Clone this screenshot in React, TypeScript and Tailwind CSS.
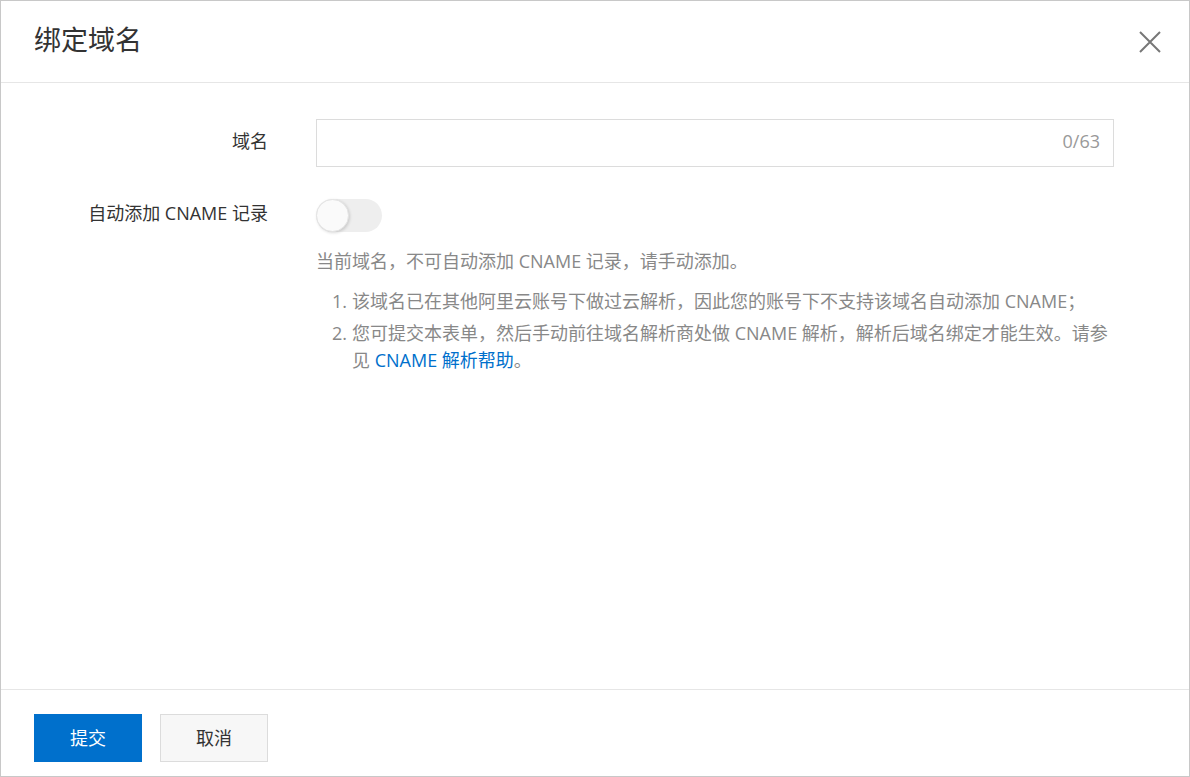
import React from 'react'

const font = "font-['Open_Sans','Noto_Sans_CJK_SC',sans-serif]"

const CloseIcon = () => (
  <svg width="24" height="24" viewBox="0 0 24 24" fill="none">
    <path d="M2 2 L22 22 M22 2 L2 22" stroke="#777" strokeWidth="2" />
  </svg>
)

const App = () => {
  return (
    <div className={`w-[1190px] h-[777px] bg-white border border-[#c8c8c8] flex flex-col text-[18px] text-[#333] ${font}`}>
      {/* header */}
      <div className='h-[82px] shrink-0 border-b border-[#e6e6e6] flex items-center justify-between pl-[33px] pr-[27px]'>
        <h1 className='text-[27px] text-[#333] leading-none pb-[5px]'>绑定域名</h1>
        <button className='p-0'>
          <CloseIcon />
        </button>
      </div>

      {/* body */}
      <div className='flex-1 pt-[36px] pr-[75px]'>
        <div className='grid grid-cols-[267px_1fr] gap-x-[48px]'>
          <div className='h-[48px] flex items-center justify-end leading-none pb-[4px]'>域名</div>
          <div className='h-[48px] border border-[#dcdcdc] flex items-center justify-end pr-[13px] pb-[4px] text-[#999]'>
            0/63
          </div>

          <div className='mt-[32px] h-[32px] flex items-center justify-end leading-none pb-[4px]'>自动添加 CNAME 记录</div>
          <div className='mt-[32px]'>
            <div className='w-[66px] h-[33px] rounded-full bg-[#eeeeee] relative'>
              <div className='absolute left-0 top-0 w-[33px] h-[33px] rounded-full bg-[#fafafa] border border-[#e4e4e4] shadow-[1px_1px_3px_rgba(0,0,0,0.15)]' />
            </div>
            <p className='mt-[16px] leading-[27px] text-[#888]'>当前域名，不可自动添加 CNAME 记录，请手动添加。</p>
            <ol className='mt-[13px] pl-[16px] text-[#888] leading-[27px] flex flex-col gap-[5px]'>
              <li className='flex'>
                <span className='w-[20px] shrink-0'>1.</span>
                <span>该域名已在其他阿里云账号下做过云解析，因此您的账号下不支持该域名自动添加 CNAME；</span>
              </li>
              <li className='flex'>
                <span className='w-[20px] shrink-0'>2.</span>
                <span>
                  您可提交本表单，然后手动前往域名解析商处做 CNAME 解析，解析后域名绑定才能生效。请参
                  <br />
                  见 <a href='#' className='text-[#0070cc]'>CNAME 解析帮助</a>。
                </span>
              </li>
            </ol>
          </div>
        </div>
      </div>

      {/* footer */}
      <div className='h-[87px] shrink-0 border-t border-[#e6e6e6] flex items-start gap-[18px] pl-[33px] pt-[24px]'>
        <button className='w-[108px] h-[48px] bg-[#0070cc] text-white'>提交</button>
        <button className='w-[108px] h-[48px] bg-[#f7f7f7] border border-[#dcdcdc] text-[#333]'>取消</button>
      </div>
    </div>
  )
}

export default App
